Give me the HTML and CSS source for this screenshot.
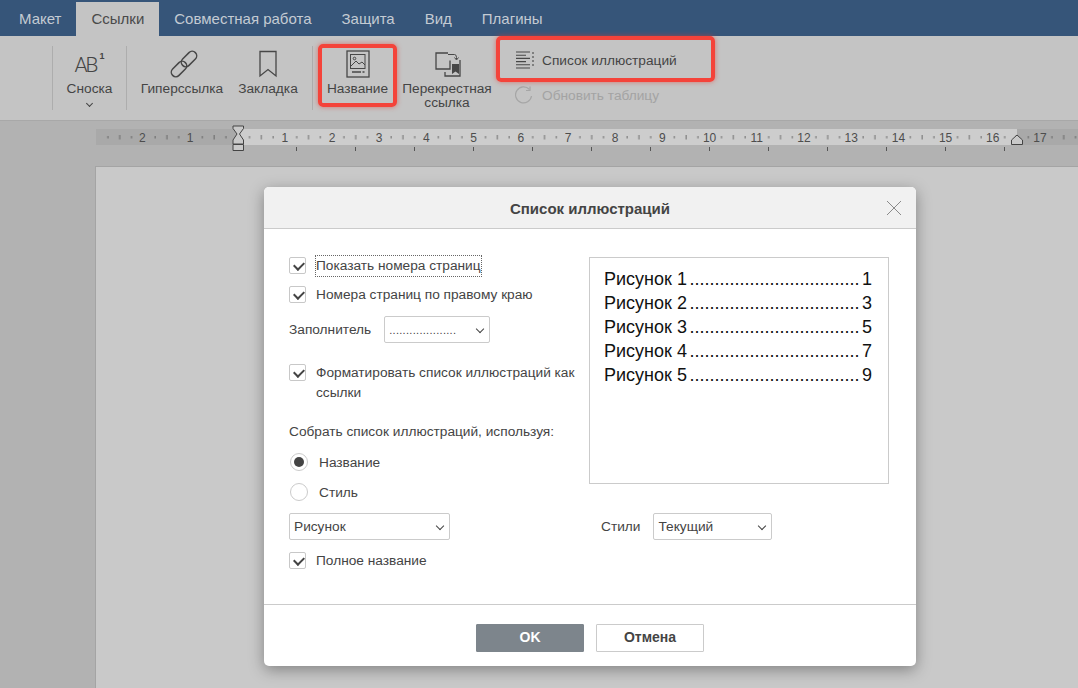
FILE: index.html
```html
<!DOCTYPE html>
<html lang="ru">
<head>
  <meta charset="UTF-8" />
  <title>Список иллюстраций</title>
  <link rel="stylesheet" href="styles.css">
</head>
<body>
  <nav class="tabs">
    <span class="tab">Макет</span>
    <span class="tab active">Ссылки</span>
    <span class="tab">Совместная работа</span>
    <span class="tab">Защита</span>
    <span class="tab">Вид</span>
    <span class="tab">Плагины</span>
  </nav>

  <div class="toolbar">
    <div class="sep"></div>
    <div class="tool tool-note">
      <div class="icon ab-icon"><span>AB</span><sup>1</sup></div>
      <div class="tool-label">Сноска</div>
      <i class="chevron"></i>
    </div>
    <div class="sep"></div>
    <div class="tool tool-link">
      <svg class="icon link-icon" width="28" height="28" viewBox="0 0 28 28" fill="none" stroke="#474747" stroke-width="1.500">
        <rect x="-9" y="-4.500" width="18" height="9" rx="4.500" transform="translate(9 19) rotate(-45)"/>
        <rect x="-9" y="-4.500" width="18" height="9" rx="4.500" transform="translate(19 9) rotate(-45)"/>
      </svg>
      <div class="tool-label">Гиперссылка</div>
    </div>
    <div class="tool tool-mark">
      <svg class="icon" width="18" height="28" viewBox="0 0 18 28" fill="none" stroke="#474747" stroke-width="1.300">
        <path d="M1 1.500h16v24.500l-8-6.500-8 6.500z"/>
      </svg>
      <div class="tool-label">Закладка</div>
    </div>
    <div class="sep sep-caption"></div>
    <div class="tool tool-caption">
      <svg class="icon" width="24" height="28" viewBox="0 0 24 28" fill="none" stroke="#474747" stroke-width="1.300">
        <rect x="1" y="1" width="22" height="26"/>
        <rect x="4.500" y="4.500" width="14.500" height="14" stroke-width="1"/>
        <circle cx="8.500" cy="8.500" r="1.300" stroke-width="1"/>
        <path d="M5 16l5-5 3 3 3-2 3 3" stroke-width="1"/>
        <path d="M6 22h9M16.500 22h2" stroke-width="1.300"/>
      </svg>
      <div class="tool-label">Название</div>
    </div>
    <div class="tool tool-cross">
      <svg class="icon" width="28" height="28" viewBox="0 0 28 28" fill="none" stroke="#474747" stroke-width="1.300">
        <path d="M17 10.500v8.500h-14v-16h12"/>
        <path d="M15 4.500h6.500q2 0 2 3v1.500" stroke-width="1"/>
        <path d="M21.500 7.500l2 2.500 2-2.500" stroke-width="1"/>
        <path d="M27 10v16h-15v-4"/>
        <path d="M19 14h7v10l-3.500-2.500-3.500 2.500z" fill="#474747" stroke="none"/>
      </svg>
      <div class="tool-label">Перекрестная<br>ссылка</div>
    </div>
    <div class="tool-list">
      <div class="list-row">
        <svg width="20" height="18" viewBox="0 0 20 18" fill="none" stroke="#474747" stroke-width="1.100">
          <path d="M1 1h14M1 4.200h10M1 7.400h14M1 10.600h10M1 13.800h14M1 17h14"/>
          <path d="M18 1v16" stroke-dasharray="2 2"/>
        </svg>
        <span>Список иллюстраций</span>
      </div>
      <div class="list-row muted">
        <svg width="20" height="18" viewBox="0 0 20 18" fill="none" stroke="#a6a6a6" stroke-width="1.200">
          <path d="M14.500 3.500a8 8 0 1 0 2 6.500"/>
          <path d="M15 0.500v4h-4"/>
        </svg>
        <span>Обновить таблицу</span>
      </div>
    </div>
  </div>

  <div class="ruler-bar">
    <svg class="ruler" width="982" height="26" viewBox="96 125 982 26">
      <defs>
        <pattern id="ticks" patternUnits="userSpaceOnUse" x="237.600" y="129" width="47.200" height="16">
          <rect x="11.500" y="7" width="0.800" height="2.500" fill="#555"/>
          <rect x="23.300" y="6" width="0.800" height="4.500" fill="#555"/>
          <rect x="35.100" y="7" width="0.800" height="2.500" fill="#555"/>
        </pattern>
        <pattern id="stops" patternUnits="userSpaceOnUse" x="296" y="146" width="59" height="5">
          <rect x="0" y="1" width="1" height="4" fill="#555"/>
        </pattern>
      </defs>
      <rect x="96" y="129" width="982" height="16" fill="#a9a9a9"/>
      <rect x="238" y="129" width="779" height="16" fill="#cdcdcd"/>
      <rect x="96" y="129" width="982" height="16" fill="url(#ticks)"/>
      <rect x="296" y="146" width="709" height="5" fill="url(#stops)"/>
      <g class="ruler-nums">
        <text x="142.400" y="141.500">2</text><text x="190" y="141.500">1</text>
        <text x="284.800" y="141.500">1</text><text x="332" y="141.500">2</text>
        <text x="379.200" y="141.500">3</text><text x="426.400" y="141.500">4</text>
        <text x="473.600" y="141.500">5</text><text x="520.800" y="141.500">6</text>
        <text x="568" y="141.500">7</text><text x="615.200" y="141.500">8</text>
        <text x="662.400" y="141.500">9</text><text x="709.600" y="141.500">10</text>
        <text x="756.800" y="141.500">11</text><text x="804" y="141.500">12</text>
        <text x="851.200" y="141.500">13</text><text x="898.400" y="141.500">14</text>
        <text x="945.600" y="141.500">15</text><text x="992.800" y="141.500">16</text>
        <text x="1040" y="141.500">17</text>
      </g>
      <path d="M233 126h10.500v2.500l-4 5.500 4 6v4h-10.500v-4l4-6-4-5.500z" fill="#c9c9c9" stroke="#444"/>
      <path d="M233 144.500h10.500v6h-10.500z" fill="#c9c9c9" stroke="#444"/>
      <path d="M1017 135l5.500 5v4.500h-11v-4.500z" fill="#c9c9c9" stroke="#444"/>
    </svg>
  </div>

  <main class="workspace">
    <div class="page"></div>
  </main>

  <div class="mark mark-caption"></div>
  <div class="mark mark-list"></div>

  <section class="dialog">
    <header class="dialog-head">
      <h2>Список иллюстраций</h2>
      <svg class="close" width="16" height="16" viewBox="0 0 16 16" stroke="#8a8a8a" stroke-width="1">
        <path d="M1 1l14 14M15 1l-14 14"/>
      </svg>
    </header>

    <div class="dialog-body">
      <div class="col-left">
        <label class="check focused"><i class="box"></i><span class="focus-text">Показать номера страниц</span></label>
        <label class="check check-right"><i class="box"></i><span>Номера страниц по правому краю</span></label>
        <div class="field-row">
          <span>Заполнитель</span>
          <div class="select select-leader"><span class="leader-dots">....................</span></div>
        </div>
        <label class="check check-format"><i class="box"></i><span>Форматировать список иллюстраций как ссылки</span></label>
        <div class="build-title">Собрать список иллюстраций, используя:</div>
        <label class="radio on"><i class="dot"></i><span>Название</span></label>
        <label class="radio"><i class="dot"></i><span>Стиль</span></label>
        <div class="select select-label"><span>Рисунок</span></div>
        <label class="check check-full"><i class="box"></i><span>Полное название</span></label>
      </div>

      <div class="col-right">
        <div class="preview">
          <div class="toc-line"><span>Рисунок 1</span><span>..................................</span><span>1</span></div>
          <div class="toc-line"><span>Рисунок 2</span><span>..................................</span><span>3</span></div>
          <div class="toc-line"><span>Рисунок 3</span><span>..................................</span><span>5</span></div>
          <div class="toc-line"><span>Рисунок 4</span><span>..................................</span><span>7</span></div>
          <div class="toc-line"><span>Рисунок 5</span><span>..................................</span><span>9</span></div>
        </div>
        <div class="styles-row">
          <span>Стили</span>
          <div class="select select-style"><span>Текущий</span></div>
        </div>
      </div>
    </div>

    <footer class="dialog-foot">
      <button class="btn primary">OK</button>
      <button class="btn">Отмена</button>
    </footer>
  </section>
</body>
</html>
```

FILE: styles.css
```css
* {
  box-sizing: border-box;
}

body {
  margin: 0;
  height: 688px;
  overflow: hidden;
  display: flex;
  flex-direction: column;
  background: #b2b2b2;
  color: #444;
  font-family: "Liberation Sans", Arial, sans-serif;
  font-size: 14px;
  position: relative;
}

/* tabs */
.tabs {
  height: 36px;
  padding: 2px 0 0 4px;
  display: flex;
  background: #365579;
  flex-shrink: 0;
}

.tab {
  padding: 0 15px;
  line-height: 34px;
  font-size: 15px;
  color: #c4cbd3;
}

.tab.active {
  background: #c4c4c4;
  color: #4a4a4a;
}

/* toolbar */
.toolbar {
  height: 85px;
  flex-shrink: 0;
  padding-left: 52px;
  display: flex;
  align-items: flex-start;
  background: #c4c4c4;
  border-bottom: 1px solid #a8a8a8;
  color: #444;
  font-size: 13.700px;
}

.sep {
  width: 1px;
  height: 64px;
  margin-top: 10px;
  background: #adadad;
}

.tool {
  display: flex;
  flex-direction: column;
  align-items: center;
  padding-top: 14px;
  flex-shrink: 0;
  text-align: center;
}

.icon {
  display: block;
  height: 28px;
  margin-bottom: 3px;
}

.link-icon {
  margin-left: 4px;
}

.tool-label {
  line-height: 14px;
  margin-top: 1px;
  white-space: nowrap;
}

.tool-note { width: 73px; }
.tool-link { width: 110px; }
.tool-mark { width: 62px; }
.tool-caption { width: 89px; }
.tool-cross { width: 90px; }

.sep-caption {
  margin-left: 13px;
}

.ab-icon {
  font-family: Roboto, sans-serif;
  font-weight: 300;
  font-size: 21px;
  line-height: 28px;
  letter-spacing: -2px;
  color: #444;
  padding-top: 1px;
  display: flex;
}

.ab-icon sup {
  font-family: "Liberation Sans", sans-serif;
  font-size: 9px;
  font-weight: 700;
  line-height: 14px;
  margin: -2px 0 0 3px;
  letter-spacing: 0;
}

.chevron {
  display: block;
  width: 5px;
  height: 5px;
  margin-top: 5px;
  border-right: 1px solid #444;
  border-bottom: 1px solid #444;
  transform: rotate(45deg);
}

.tool-list {
  margin-left: 23px;
  padding-top: 15px;
}

.list-row {
  height: 18px;
  display: flex;
  align-items: center;
  gap: 7px;
  margin-bottom: 17px;
  white-space: nowrap;
}

.list-row.muted {
  color: #a3a3a3;
}

/* ruler */
.ruler-bar {
  height: 44px;
  flex-shrink: 0;
  padding: 4px 0 0 96px;
  background: #b2b2b2;
}

.ruler {
  display: block;
}

.ruler-nums text {
  font-family: "Liberation Sans", Arial, sans-serif;
  font-size: 12px;
  fill: #4d4d4d;
  text-anchor: middle;
}

/* page behind the dialog */
.workspace {
  flex: 1;
  padding: 1px 0 0 95px;
  overflow: hidden;
}

.page {
  height: 100%;
  background: #c9c9c9;
  border-left: 1px solid #a4a4a4;
  border-top: 1px solid #a4a4a4;
}

/* red marks drawn over the screenshot */
.mark {
  position: absolute;
  border: 4px solid #f4433a;
  border-radius: 5px;
  box-shadow: 0 0 5px rgba(230, 60, 50, 0.6);
}

.mark-caption {
  left: 318px;
  top: 44px;
  width: 79px;
  height: 63px;
}

.mark-list {
  left: 496px;
  top: 36px;
  width: 219px;
  height: 46px;
}

/* dialog */
.dialog {
  position: absolute;
  left: 264px;
  top: 187px;
  width: 652px;
  height: 479px;
  background: #fff;
  border-radius: 5px;
  box-shadow: 0 4px 15px rgba(0, 0, 0, 0.35);
  display: flex;
  flex-direction: column;
  font-size: 13.700px;
  color: #444;
}

.dialog-head {
  height: 42px;
  flex-shrink: 0;
  padding-top: 1px;
  position: relative;
  display: flex;
  align-items: center;
  justify-content: center;
  background: #f1f1f1;
  border-bottom: 1px solid #cbcbcb;
  border-radius: 5px 5px 0 0;
}

.dialog-head h2 {
  margin: 0;
  font-size: 15px;
  font-weight: 700;
  color: #444;
}

.close {
  position: absolute;
  right: 14px;
  top: 13px;
}

.dialog-body {
  flex: 1;
  display: flex;
  padding: 27px 27px 0 25px;
  border-bottom: 1px solid #cbcbcb;
}

.col-left {
  width: 300px;
  display: flex;
  flex-direction: column;
  align-items: flex-start;
}

.col-right {
  width: 300px;
  padding-top: 1px;
}

.check {
  display: flex;
  align-items: flex-start;
  gap: 10px;
  line-height: 20px;
  min-height: 20px;
}

.box {
  width: 17px;
  height: 17px;
  margin-top: 1px;
  flex-shrink: 0;
  border: 1px solid #c8c8c8;
  border-radius: 2px;
  position: relative;
}

.box::after {
  content: "";
  position: absolute;
  left: 4px;
  top: 2px;
  width: 8px;
  height: 5px;
  border-left: 2px solid #444;
  border-bottom: 2px solid #444;
  transform: rotate(-45deg) translate(-1px, 1px);
}

.focus-text {
  outline: 1px dotted #666;
  line-height: 20px;
}

.check-right { margin-top: 9px; }
.check-format { margin-top: 20px; }
.check-full { margin-top: 11px; }

.field-row {
  display: flex;
  align-items: center;
  gap: 13px;
  margin-top: 11px;
}

.select {
  height: 27px;
  border: 1px solid #cbcbcb;
  border-radius: 2px;
  padding: 0 4px;
  display: flex;
  align-items: center;
  position: relative;
}

.select::after {
  content: "";
  position: absolute;
  right: 6px;
  top: 9px;
  width: 5px;
  height: 5px;
  border-right: 1px solid #444;
  border-bottom: 1px solid #444;
  transform: rotate(45deg);
}

.select-leader { width: 106px; }
.select-label { width: 161px; margin-top: 11px; }
.select-style { width: 119px; }

.leader-dots {
  font-size: 11px;
  letter-spacing: 0.300px;
}

.build-title {
  margin-top: 19px;
  line-height: 20px;
}

.radio {
  display: flex;
  align-items: center;
  gap: 11px;
  height: 20px;
  margin-top: 10px;
  padding-left: 1px;
}

.dot {
  width: 18px;
  height: 18px;
  border: 1px solid #cbcbcb;
  border-radius: 50%;
  position: relative;
}

.radio.on .dot::after {
  content: "";
  position: absolute;
  left: 3px;
  top: 3px;
  width: 10px;
  height: 10px;
  border-radius: 50%;
  background: #444;
}

.preview {
  height: 227px;
  border: 1px solid #cbcbcb;
  padding: 9px 16px 0 14px;
  font-size: 18px;
  line-height: 24px;
  color: #111;
}

.toc-line {
  display: flex;
  justify-content: space-between;
  white-space: nowrap;
}

.styles-row {
  display: flex;
  align-items: center;
  gap: 13px;
  margin-top: 29px;
  padding-left: 12px;
}

.dialog-foot {
  height: 61px;
  flex-shrink: 0;
  display: flex;
  justify-content: center;
  align-items: flex-start;
  gap: 12px;
  padding-top: 19px;
}

.btn {
  width: 108px;
  height: 28px;
  padding: 0 0 2px;
  border: 1px solid #cbcbcb;
  border-radius: 1px;
  background: #fff;
  color: #444;
  font-family: "Liberation Sans", Arial, sans-serif;
  font-size: 14px;
  font-weight: 700;
}

.btn.primary {
  background: #7d858c;
  border-color: #7d858c;
  color: #fff;
}
```
